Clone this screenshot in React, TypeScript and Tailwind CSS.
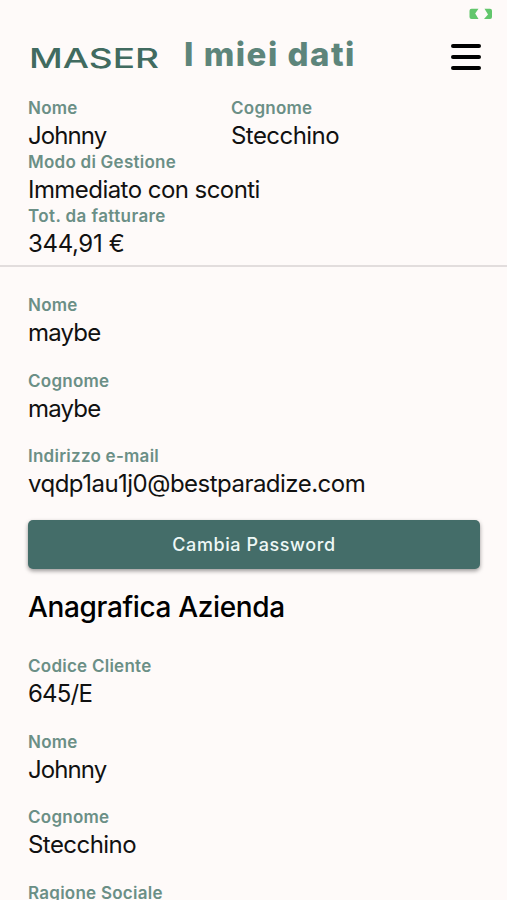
type FieldProps = {
  label: string;
  value?: string;
  labelClass?: string;
  valueClass?: string;
};

function Field({ label, value, labelClass = "tracking-[0.25px]", valueClass = "tracking-[-0.55px]" }: FieldProps) {
  return (
    <div className="h-[54px] whitespace-nowrap">
      <div className={`h-[22px] text-[17px] leading-[22px] font-semibold text-[#6b8f86] ${labelClass}`}>
        <span>{label}</span>
      </div>
      {value && (
        <div className={`h-8 text-2xl leading-[34px] text-[#111111] ${valueClass}`}>
          <span>{value}</span>
        </div>
      )}
    </div>
  );
}

function BatteryIcon() {
  return (
    <svg width="24" height="12" viewBox="0 0 24 12" fill="#62c66c">
      <path d="M2.500 .8H9.500L6.200 5.500 9.500 11H2.500Q.5 11 .5 9V2.800Q.5 .8 2.500 .8Z" />
      <path d="M15.500 .8H21Q23 .8 23 2.800V9Q23 11 21 11H15L19 6.500Z" />
    </svg>
  );
}

export default function App() {
  return (
    <div className="h-[900px] w-full overflow-hidden bg-[#fefaf9] font-['Inter','Liberation_Sans',sans-serif]">
      <div className="flex h-7 justify-end pt-2 pr-[14px]">
        <BatteryIcon />
      </div>
      <header className="flex h-[69px] items-start pr-[26px] pl-[27px]">
        <svg className="mt-[10px]" width="136" height="40" viewBox="-4 -7 136 40" role="img">
          <text
            x="-2"
            y="22.500"
            textLength="130"
            lengthAdjust="spacingAndGlyphs"
            fontSize="27"
            fontWeight="500"
            fill="#416b60"
          >
            MASER
          </text>
        </svg>
        <h1 className="ml-[21px] h-12 text-[33px] leading-[53px] font-extrabold tracking-[1.5px] whitespace-nowrap text-[#5d857b]">
          <span>I miei dati</span>
        </h1>
        <button className="mt-4 ml-auto flex h-[26px] w-[30px] flex-col justify-between" aria-label="Menu">
          <span className="h-1 w-full rounded-full bg-black" />
          <span className="h-1 w-full rounded-full bg-black" />
          <span className="h-1 w-full rounded-full bg-black" />
        </button>
      </header>

      <section className="h-[170px] border-b-2 border-[#e2dddd] px-7">
        <div className="grid grid-cols-[203px_1fr]">
          <Field label="Nome" value="Johnny" valueClass="tracking-[-0.9px]" />
          <Field label="Cognome" value="Stecchino" />
        </div>
        <Field label="Modo di Gestione" value="Immediato con sconti" />
        <Field label="Tot. da fatturare" value="344,91 €" labelClass="tracking-[0.4px]" valueClass="tracking-[-0.35px]" />
      </section>

      <main className="px-7 pt-[27px]">
        <div className="flex flex-col gap-[21.500px]">
          <Field label="Nome" value="maybe" valueClass="tracking-[-0.8px]" />
          <Field label="Cognome" value="maybe" valueClass="tracking-[-0.8px]" />
          <Field label="Indirizzo e-mail" value="vqdp1au1j0@bestparadize.com" valueClass="tracking-[-0.52px]" />
        </div>
        <button className="mt-[21px] flex h-[49px] w-[452px] items-center justify-center rounded-[5px] bg-[#446d69] text-[18px] font-medium tracking-[0.6px] text-[#eef8f6] shadow-[0_2px_4px_rgba(0,0,0,0.4)]">
          <span>Cambia Password</span>
        </button>
        <h2 className="mt-[19px] h-[38px] text-[28px] leading-[38px] font-medium tracking-[-0.35px] whitespace-nowrap text-black">
          <span>Anagrafica Azienda</span>
        </h2>
        <div className="mt-[29px] flex flex-col gap-[21.500px]">
          <Field label="Codice Cliente" value="645/E" valueClass="tracking-[-0.8px]" />
          <Field label="Nome" value="Johnny" valueClass="tracking-[-0.9px]" />
          <Field label="Cognome" value="Stecchino" />
          <Field label="Ragione Sociale" />
        </div>
      </main>
    </div>
  );
}
